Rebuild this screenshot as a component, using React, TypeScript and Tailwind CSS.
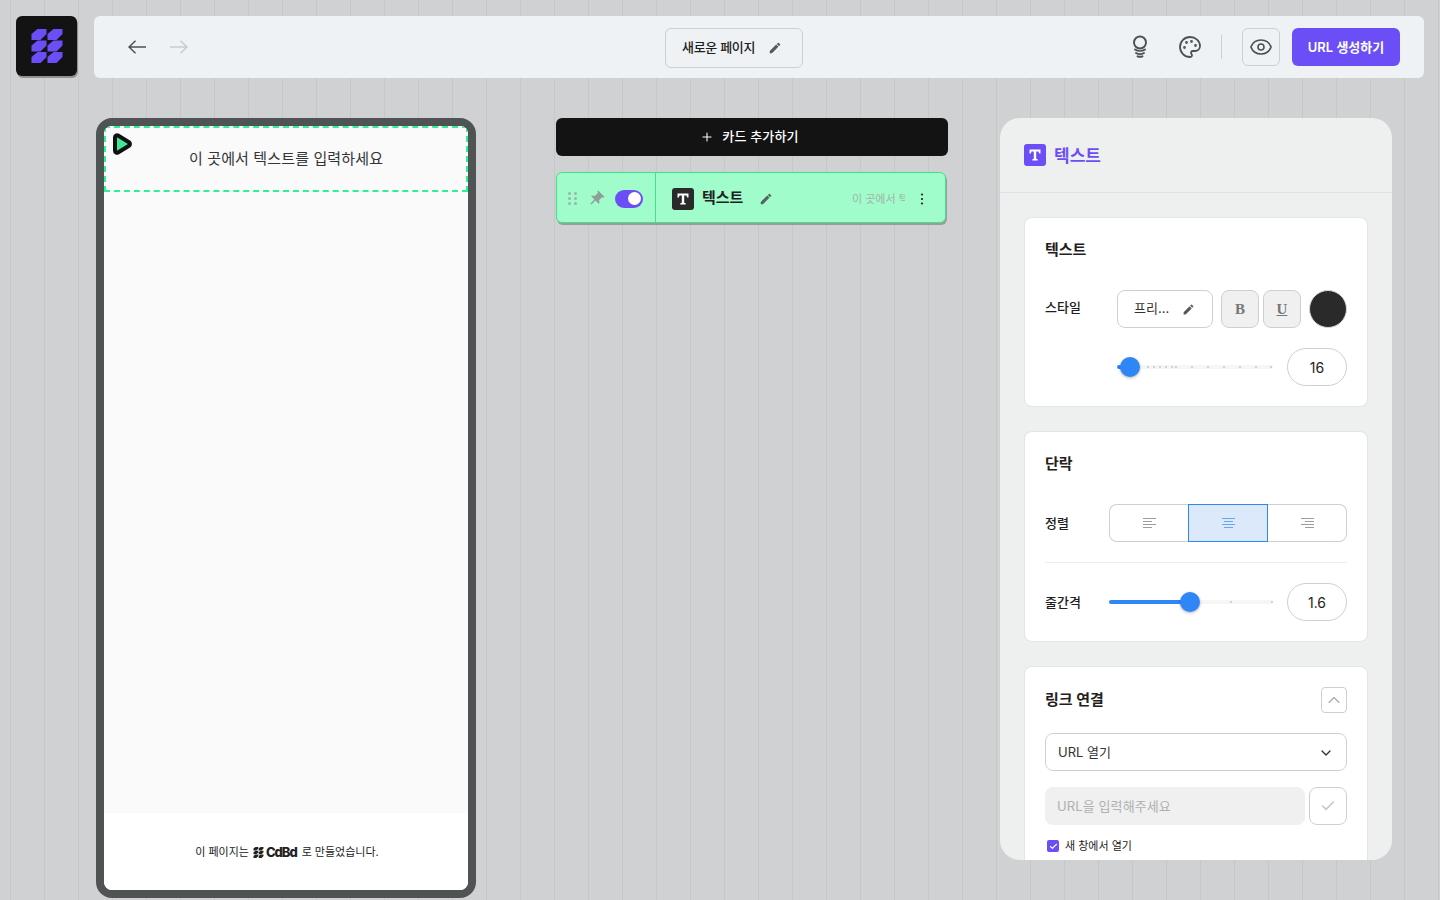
import { Check, ChevronDown, ChevronUp, Eye, Palette, Plus } from 'lucide-react';

const Logo = ({ size, color }: { size: number; color: string }) => (
  <svg width={size} height={size} viewBox="0 0 31 34" fill={color}>
    {[0, 11.5, 23].map((y) => (
      <g key={y} transform={`translate(0 ${y})`}>
        <path d="M6 0h9v5l-6 6H0V5z" />
        <path d="M22 0h9v5l-6 6h-9V5z" />
      </g>
    ))}
  </svg>
);

const TIcon = ({ bg, size }: { bg: string; size: string }) => (
  <div className={`${size} ${bg} rounded-[3px] flex items-center justify-center`}>
    <svg width="14" height="14" viewBox="0 0 14 14" fill="white">
      <path d="M1.5 1.5h11v4h-1.4l-.6-2H8.2v7.3l1.5.4v1.3H4.3v-1.3l1.5-.4V3.5H3.5l-.6 2H1.5z" />
    </svg>
  </div>
);

const EditIcon = ({ size, color }: { size: number; color: string }) => (
  <svg width={size} height={size} viewBox="0 0 24 24" fill={color}>
    <path d="M3 17.25V21h3.75L17.81 9.94l-3.75-3.75L3 17.25zM20.71 7.04c.39-.39.39-1.02 0-1.41l-2.34-2.34c-.39-.39-1.02-.39-1.41 0l-1.83 1.83 3.75 3.75 1.83-1.83z" />
  </svg>
);

const Arrow = ({ color, flip }: { color: string; flip?: boolean }) => (
  <svg width="18" height="14" viewBox="0 0 18 14" fill="none" stroke={color} strokeWidth="1.5" className={flip ? 'rotate-180' : ''}>
    <path d="M18 7H1M7.5 .8 1 7l6.5 6.2" />
  </svg>
);

const AlignIcon = ({ align, color }: { align: string; color: string }) => (
  <div className={`flex flex-col ${align} gap-[1.5px]`}>
    <div className={`w-[13px] h-[1.5px] ${color}`} />
    <div className={`w-[9px] h-[1.5px] ${color}`} />
    <div className={`w-[13px] h-[1.5px] ${color}`} />
    <div className={`w-[9px] h-[1.5px] ${color}`} />
  </div>
);

const Dots = ({ positions }: { positions: number[] }) => (
  <>
    {positions.map((p) => (
      <span key={p} className="absolute top-1/2 -mt-px w-[2px] h-[2px] rounded-full bg-[#c4c6c8]" style={{ left: p }} />
    ))}
  </>
);

const App = () => {
  return (
    <div className="h-screen overflow-hidden flex flex-col bg-[#cfd1d2] bg-[linear-gradient(to_right,#c5c7c9_1px,transparent_1px)] bg-[length:34px_34px] bg-[position:10px_0] font-['Inter','Noto_Sans_CJK_KR',sans-serif] text-[#1f2021]">
      <header className="flex gap-[17px] pt-4 pl-4 pr-4">
        <div className="w-[61px] h-[60px] rounded-[6px] bg-[#131314] shadow-[1px_2px_0_#8f9192] flex items-center justify-center">
          <Logo size={34} color="#6c4ef6" />
        </div>
        <div className="flex-1 h-[62px] rounded-[6px] bg-[#eef2f5] flex items-center pl-[34px] pr-6">
          <div className="w-[537px] flex items-center gap-6">
            <Arrow color="#4d5052" />
            <Arrow color="#c9cccf" flip />
          </div>
          <div className="w-[138px] h-10 mt-px rounded-md border border-[#cdd0d3] flex items-center pl-4 gap-[13px] text-[13px] font-medium tracking-[-0.3px]">
            <span>새로운 페이지</span>
            <EditIcon size={14} color="#55585a" />
          </div>
          <div className="flex-1 flex items-center justify-end">
            <svg width="20" height="24" viewBox="0 0 20 24" fill="none" stroke="#4d5052" strokeWidth="1.9" strokeLinecap="round">
              <circle cx="10" cy="7.5" r="6" />
              <path d="M5 14.5c2.8 1.8 7.2 1.8 10 0M6 18c2.4 1.3 5.6 1.3 8 0M7.5 21.3c1.5.6 3.5.6 5 0" />
            </svg>
            <Palette size={24} strokeWidth={1.8} className="ml-[28px] text-[#4d5052]" />
            <div className="ml-[19px] mr-5 w-px h-6 bg-[#cdd0d3]" />
            <div className="w-[38px] h-[38px] rounded-md border border-[#cdd0d3] flex items-center justify-center">
              <Eye size={24} strokeWidth={1.6} className="text-[#4d5052]" />
            </div>
            <button className="ml-3 w-[108px] h-[38px] pt-px rounded-md bg-[#6c4ef6] text-white text-[13px] font-semibold">URL 생성하기</button>
          </div>
        </div>
      </header>

      <main className="flex pt-10 pl-24">
        <div className="w-[380px] h-[780px] rounded-2xl border-8 border-[#505353] bg-white overflow-hidden flex flex-col shrink-0">
          <div className="relative flex-1 bg-[#fafafa]">
            <div className="h-[66px] border-2 border-dashed border-[#2ef094] flex justify-center pt-[19px] text-[15px] leading-[24px] tracking-[0.13px] text-[#333536]">
              이 곳에서 텍스트를 입력하세요
            </div>
            <svg className="absolute left-[6px] top-[6px]" width="24" height="24" viewBox="0 0 24 24">
              <path d="M5 5.2c0-1.6 1.7-2.5 3-1.7l11 6.8c1.3.8 1.3 2.6 0 3.4L8 20.5c-1.3.8-3-.1-3-1.7z" fill="#3ee89a" stroke="#111" strokeWidth="4" strokeLinejoin="round" />
            </svg>
          </div>
          <div className="h-[77px] bg-white flex items-center justify-center gap-1 text-[11px] text-[#222] pt-[2px] pl-[2px]">
            <span>이 페이지는</span>
            <Logo size={11} color="#222" />
            <span className="text-[13px] font-extrabold tracking-[-0.08em] -ml-[2px] mr-[1px]">CdBd</span>
            <span>로 만들었습니다.</span>
          </div>
        </div>

        <div className="ml-20 w-[392px] shrink-0 flex flex-col gap-4">
          <button className="h-[38px] pr-[5px] rounded-md bg-[#131314] text-white text-[13px] font-medium tracking-[0.15px] flex items-center justify-center gap-[8px]">
            <Plus size={14} strokeWidth={1.8} />
            카드 추가하기
          </button>
          <div className="w-[390px] h-[51px] rounded-md border border-[#45e08a] bg-[#a0fcca] shadow-[1px_2px_0_#9a9c9d] flex">
            <div className="w-[99px] pt-[2px] border-r border-[#45e08a] flex items-center pl-[11px]">
              <div className="grid grid-cols-2 gap-x-[3px] gap-y-[2px]">
                {[0, 1, 2, 3, 4, 5].map((i) => (
                  <span key={i} className="w-[3px] h-[3px] rounded-full bg-[#98b8a8]" />
                ))}
              </div>
              <svg width="18" height="18" viewBox="0 0 24 24" fill="#8f9f97" className="ml-[10px] rotate-45">
                <path d="M16 9V4h1c.55 0 1-.45 1-1s-.45-1-1-1H7c-.55 0-1 .45-1 1s.45 1 1 1h1v5c0 1.66-1.34 3-3 3v2h5.97v7l1 1 1-1v-7H19v-2c-1.66 0-3-1.34-3-3z" />
              </svg>
              <div className="ml-[10px] w-7 h-[18px] rounded-full bg-[#6c4ef6] flex items-center justify-end pr-[2px]">
                <div className="w-[13px] h-[13px] rounded-full bg-white" />
              </div>
            </div>
            <div className="flex-1 pt-[2px] flex items-center pl-4 pr-[21px]">
              <TIcon bg="bg-[#2a2a2b]" size="w-[22px] h-[22px]" />
              <span className="ml-2 text-[15px] leading-[20px] font-bold -mt-[1px]">텍스트</span>
              <div className="ml-[16px]">
                <EditIcon size={14} color="#55635c" />
              </div>
              <span className="ml-auto w-[53px] pt-px overflow-hidden whitespace-nowrap text-[11px] text-[#a3b3aa]">이 곳에서 텍스트를</span>
              <svg className="ml-[15px]" width="4" height="14" viewBox="0 0 4 14" fill="#222">
                <circle cx="2" cy="2.5" r="1.1" />
                <circle cx="2" cy="7" r="1.1" />
                <circle cx="2" cy="11.5" r="1.1" />
              </svg>
            </div>
          </div>
        </div>

        <aside className="ml-[52px] w-[392px] h-[742px] rounded-[20px] bg-[#eeefef] overflow-hidden shrink-0">
          <div className="h-[75px] border-b border-[#e0e1e2] flex items-center pl-6 gap-2 pb-[1px]">
            <TIcon bg="bg-[#6c4ef6]" size="w-[22px] h-[22px]" />
            <span className="text-[17px] leading-[24px] pt-[3px] font-bold text-[#6c4ef6]">텍스트</span>
          </div>
          <div className="px-6 pt-6 flex flex-col gap-6">
            <section className="h-[190px] rounded-lg border border-[#e3e4e5] bg-white px-5 pt-5">
              <h3 className="text-[15px] leading-[24px] font-bold">텍스트</h3>
              <div className="mt-[28px] flex items-center">
                <span className="w-[72px] -mt-[2px] text-[13px] font-medium">스타일</span>
                <div className="w-24 h-[38px] rounded-lg border border-[#cdd0d3] flex items-center pl-4 gap-[13px] text-[13px] text-[#333]">
                  <span>프리...</span>
                  <EditIcon size={13} color="#55585a" />
                </div>
                <div className="ml-2 w-[38px] h-[38px] rounded-lg border border-[#cdd0d3] bg-[#f0f0f0] flex items-center justify-center font-['Liberation_Serif',serif] font-bold text-[15px] text-[#777]">B</div>
                <div className="ml-1 w-[38px] h-[38px] rounded-lg border border-[#cdd0d3] bg-[#f0f0f0] flex items-center justify-center font-['Liberation_Serif',serif] font-bold text-[15px] text-[#777] underline">U</div>
                <div className="ml-2 w-[38px] h-[38px] rounded-full bg-[#2a2a2b] border border-[#d5d5d5]" />
              </div>
              <div className="mt-[20px] flex items-center">
                <div className="ml-[72px] w-[156px] h-[38px] relative flex items-center">
                  <div className="w-full h-1 bg-[#f6f6f6] rounded-full" />
                  <Dots positions={[30, 36, 42, 48, 54, 58, 74, 90, 106, 122, 138, 153]} />
                  <div className="absolute left-0 w-3 h-1 bg-[#2f86f6] rounded-full" />
                  <div className="absolute left-[3px] w-5 h-5 rounded-full bg-[#2f86f6] shadow-[0_1px_3px_rgba(0,0,0,0.3)]" />
                </div>
                <div className="ml-[14px] w-[60px] h-[38px] rounded-full border border-[#cdd0d3] flex items-center justify-center text-[14px]">16</div>
              </div>
            </section>

            <section className="h-[211px] rounded-lg border border-[#e3e4e5] bg-white px-5 pt-5">
              <h3 className="text-[15px] leading-[24px] font-bold">단락</h3>
              <div className="mt-[28px] flex items-center">
                <span className="w-16 pt-px text-[13px] font-medium">정렬</span>
                <div className="flex-1 h-[38px] flex">
                  <div className="flex-1 rounded-l-lg border border-r-0 border-[#cdd0d3] flex items-center justify-center">
                    <AlignIcon align="items-start" color="bg-[#9a9c9e]" />
                  </div>
                  <div className="flex-1 border border-[#2f86f6] bg-[#dce9fb] flex items-center justify-center">
                    <AlignIcon align="items-center" color="bg-[#6aa6f6]" />
                  </div>
                  <div className="flex-1 rounded-r-lg border border-l-0 border-[#cdd0d3] flex items-center justify-center">
                    <AlignIcon align="items-end" color="bg-[#9a9c9e]" />
                  </div>
                </div>
              </div>
              <div className="mt-5 h-px bg-[#ececec]" />
              <div className="mt-5 flex items-center">
                <span className="w-16 pt-px text-[13px] font-medium">줄간격</span>
                <div className="w-[164px] h-[38px] relative flex items-center">
                  <div className="w-full h-1 bg-[#f6f6f6] rounded-full" />
                  <Dots positions={[121, 162]} />
                  <div className="absolute left-0 w-[80px] h-1 bg-[#2f86f6] rounded-full" />
                  <div className="absolute left-[71px] w-5 h-5 rounded-full bg-[#2f86f6] shadow-[0_1px_3px_rgba(0,0,0,0.3)]" />
                </div>
                <div className="ml-[14px] w-[60px] h-[38px] rounded-full border border-[#cdd0d3] flex items-center justify-center text-[14px]">1.6</div>
              </div>
            </section>

            <section className="h-[260px] rounded-lg border border-[#e3e4e5] bg-white px-5 pt-5">
              <div className="flex items-center justify-between">
                <h3 className="text-[15px] leading-[24px] font-bold">링크 연결</h3>
                <div className="w-[26px] h-[26px] rounded border border-[#cdd0d3] flex items-center justify-center">
                  <ChevronUp size={20} strokeWidth={1.4} className="text-[#a8abad]" />
                </div>
              </div>
              <div className="mt-5 h-[38px] pt-px rounded-lg border border-[#cdd0d3] flex items-center justify-between pl-3 pr-3 text-[13px] text-[#333]">
                <span>URL 열기</span>
                <ChevronDown size={16} strokeWidth={2} className="text-[#333]" />
              </div>
              <div className="mt-4 flex gap-1">
                <div className="flex-1 h-[38px] pt-px rounded-lg bg-[#f0f0f0] flex items-center pl-3 text-[13px] tracking-[0.1px] text-[#aeb0b2]">URL을 입력해주세요</div>
                <div className="w-[38px] h-[38px] rounded-lg border border-[#cdd0d3] flex items-center justify-center">
                  <Check size={16} strokeWidth={2.4} className="text-[#c5c7c9]" />
                </div>
              </div>
              <div className="mt-[13px] ml-[2px] flex items-center gap-[6px] text-[11px]">
                <div className="w-3 h-3 rounded-[2px] bg-[#6c4ef6] flex items-center justify-center">
                  <Check size={9} strokeWidth={3} className="text-white" />
                </div>
                <span>새 창에서 열기</span>
              </div>
            </section>
          </div>
        </aside>
      </main>
    </div>
  );
};

export default App;
